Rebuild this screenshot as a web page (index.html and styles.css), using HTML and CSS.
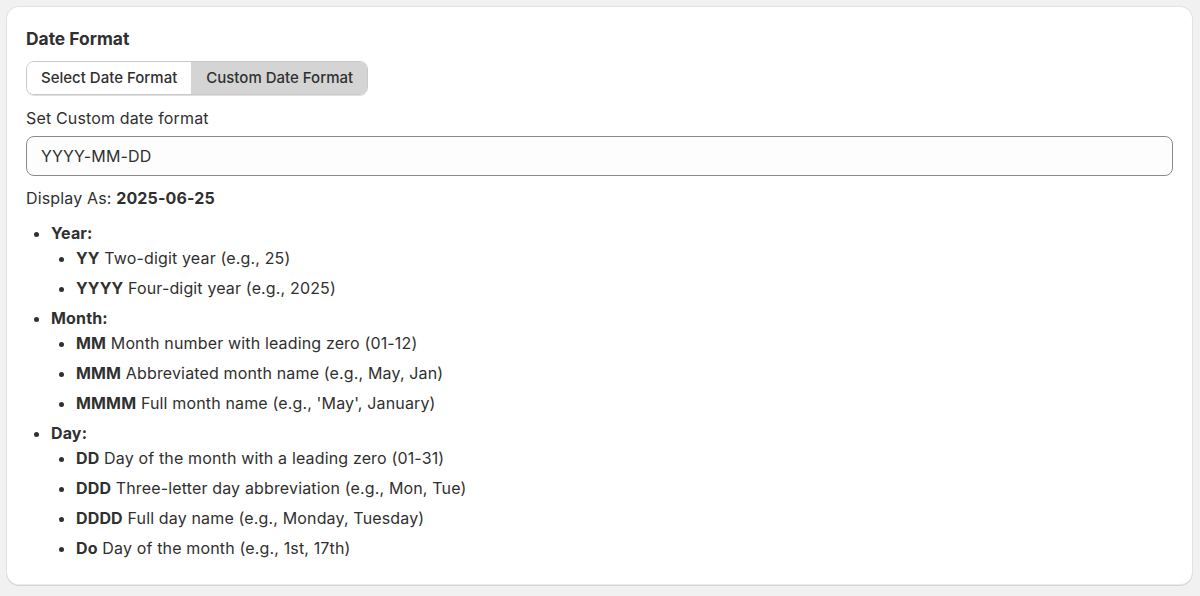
FILE: index.html
```html
<!DOCTYPE html>
<html>
<head>
<meta charset="utf-8">
<link rel="stylesheet" href="styles.css">
</head>
<body>
<div class="card">
  <h2 class="title">Date Format</h2>
  <div class="seg">
    <button class="seg-btn">Select Date Format</button>
    <button class="seg-btn active">Custom Date Format</button>
  </div>
  <label class="label">Set Custom date format</label>
  <div class="input">YYYY-MM-DD</div>
  <p class="display">Display As: <b>2025-06-25</b></p>
  <ul class="list">
    <li><b>Year:</b>
      <ul class="sub">
        <li><b>YY</b> Two-digit year (e.g., 25)</li>
        <li><b>YYYY</b> Four-digit year (e.g., 2025)</li>
      </ul>
    </li>
    <li><b>Month:</b>
      <ul class="sub">
        <li><b>MM</b> Month number with leading zero (01-12)</li>
        <li><b>MMM</b> Abbreviated month name (e.g., May, Jan)</li>
        <li><b>MMMM</b> Full month name (e.g., 'May', January)</li>
      </ul>
    </li>
    <li><b>Day:</b>
      <ul class="sub">
        <li><b>DD</b> Day of the month with a leading zero (01-31)</li>
        <li><b>DDD</b> Three-letter day abbreviation (e.g., Mon, Tue)</li>
        <li><b>DDDD</b> Full day name (e.g., Monday, Tuesday)</li>
        <li><b>Do</b> Day of the month (e.g., 1st, 17th)</li>
      </ul>
    </li>
  </ul>
</div>
</body>
</html>
```
FILE: styles.css
```css
html, body {
  margin: 0;
  padding: 0;
}
body {
  background: #f1f1f1;
  padding: 7px 8px 11px 7px;
  font-family: Inter, "Noto Sans", sans-serif;
  color: #303030;
  font-size: 16px;
  line-height: 22px;
}
.card {
  background: #ffffff;
  border-radius: 12px;
  box-shadow: 0 1px 0 0 rgba(26,26,26,0.07), 0 0 0 1px rgba(0,0,0,0.06), inset 0 -1px 0 0 rgba(0,0,0,0.08);
  padding: 20px 19px 26px 19px;
  display: flex;
  flex-direction: column;
  align-items: flex-start;
}
.title {
  margin: 0;
  font-size: 17.4px;
  font-weight: 650;
  line-height: 24px;
}
.seg {
  display: flex;
  margin-top: 10px;
  border: 1px solid #c9c9c9;
  border-radius: 8px;
  overflow: hidden;
  box-shadow: 0 1px 0 rgba(0,0,0,0.12);
}
.seg-btn {
  font: inherit;
  font-size: 15px;
  font-weight: 500;
  color: #303030;
  background: #ffffff;
  border: 0;
  height: 32px;
  padding: 0 14px;
  margin: 0;
}
.seg-btn + .seg-btn {
  border-left: 1px solid #d4d4d4;
}
.seg-btn.active {
  background: #d4d4d4;
}
.label {
  margin-top: 12px;
  letter-spacing: 0.15px;
}
.input {
  margin-top: 7px;
  align-self: stretch;
  height: 40px;
  box-sizing: border-box;
  border: 1px solid #8a8a8a;
  border-radius: 8px;
  background: #fdfdfd;
  padding: 0 14px;
  font-size: 16px;
  letter-spacing: 0.15px;
  display: flex;
  align-items: center;
}
.display {
  margin: 11px 0 0 0;
  letter-spacing: 0.15px;
}
.display b {
  font-weight: 700;
}
.list {
  margin: 13px 0 0 0;
  padding-left: 25px;
  letter-spacing: 0.15px;
}
.list > li {
  margin: 0 0 8px 0;
}
.list b {
  font-weight: 650;
}
.sub {
  list-style: disc;
  padding-left: 25px;
  margin: 3px 0 0 0;
}
.sub li {
  margin-bottom: 8px;
}
.list > li:last-child, .sub li:last-child {
  margin-bottom: 0;
}
```
